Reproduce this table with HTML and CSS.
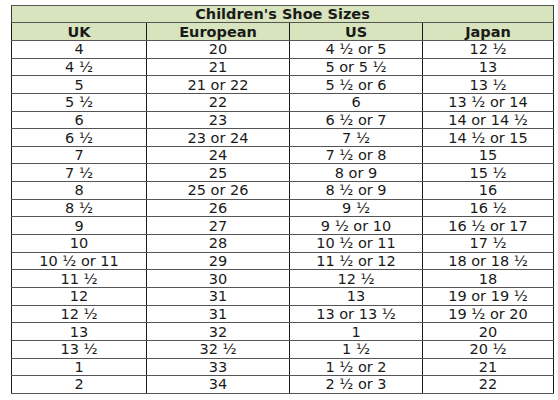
FILE: index.html
```html
<!DOCTYPE html>
<html>
<head>
<meta charset="utf-8">
<link rel="stylesheet" href="styles.css">
</head>
<body>
<div class="page">
<table class="sizes">
<colgroup><col class="c1"><col class="c2"><col class="c3"><col class="c4"></colgroup>
<thead>
<tr class="title"><th colspan="4">Children's Shoe Sizes</th></tr>
<tr class="head"><th>UK</th><th>European</th><th>US</th><th>Japan</th></tr>
</thead>
<tbody>
<tr><td>4</td><td>20</td><td>4 ½ or 5</td><td>12 ½</td></tr>
<tr><td>4 ½</td><td>21</td><td>5 or 5 ½</td><td>13</td></tr>
<tr><td>5</td><td>21 or 22</td><td>5 ½ or 6</td><td>13 ½</td></tr>
<tr><td>5 ½</td><td>22</td><td>6</td><td>13 ½ or 14</td></tr>
<tr><td>6</td><td>23</td><td>6 ½ or 7</td><td>14 or 14 ½</td></tr>
<tr><td>6 ½</td><td>23 or 24</td><td>7 ½</td><td>14 ½ or 15</td></tr>
<tr><td>7</td><td>24</td><td>7 ½ or 8</td><td>15</td></tr>
<tr><td>7 ½</td><td>25</td><td>8 or 9</td><td>15 ½</td></tr>
<tr><td>8</td><td>25 or 26</td><td>8 ½ or 9</td><td>16</td></tr>
<tr><td>8 ½</td><td>26</td><td>9 ½</td><td>16 ½</td></tr>
<tr><td>9</td><td>27</td><td>9 ½ or 10</td><td>16 ½ or 17</td></tr>
<tr><td>10</td><td>28</td><td>10 ½ or 11</td><td>17 ½</td></tr>
<tr><td>10 ½ or 11</td><td>29</td><td>11 ½ or 12</td><td>18 or 18 ½</td></tr>
<tr><td>11 ½</td><td>30</td><td>12 ½</td><td>18</td></tr>
<tr><td>12</td><td>31</td><td>13</td><td>19 or 19 ½</td></tr>
<tr><td>12 ½</td><td>31</td><td>13 or 13 ½</td><td>19 ½ or 20</td></tr>
<tr><td>13</td><td>32</td><td>1</td><td>20</td></tr>
<tr><td>13 ½</td><td>32 ½</td><td>1 ½</td><td>20 ½</td></tr>
<tr><td>1</td><td>33</td><td>1 ½ or 2</td><td>21</td></tr>
<tr><td>2</td><td>34</td><td>2 ½ or 3</td><td>22</td></tr>
</tbody>
</table>
</div>
</body>
</html>
```

FILE: styles.css
```css
html, body {
  margin: 0;
  padding: 0;
  background: #ffffff;
}
.page {
  padding: 5px 0 0 11px;
}
.sizes {
  border-collapse: collapse;
  table-layout: fixed;
  width: 542px;
  font-family: "DejaVu Sans", Verdana, sans-serif;
  font-size: 14.5px;
  color: #1a1a1a;
  border: 1px solid #3a3a3a;
}
.c1 { width: 135px; }
.c2 { width: 143px; }
.c3 { width: 133px; }
.c4 { width: 131px; }
.sizes th, .sizes td {
  padding: 0;
  text-align: center;
  line-height: 16px;
  border-left: 1px solid #1a1a1a;
  border-right: 1px solid #1a1a1a;
  border-top: 1px solid #555555;
  border-bottom: 1px solid #555555;
  white-space: nowrap;
}
.title th {
  background: #d7e4bd;
  height: 16px;
  font-weight: bold;
  border-left: 1px solid #3a3a3a;
  border-right: 1px solid #3a3a3a;
}
.head th {
  background: #d7e4bd;
  height: 17px;
  font-weight: bold;
}
.sizes td {
  height: 16.65px;
}
```
